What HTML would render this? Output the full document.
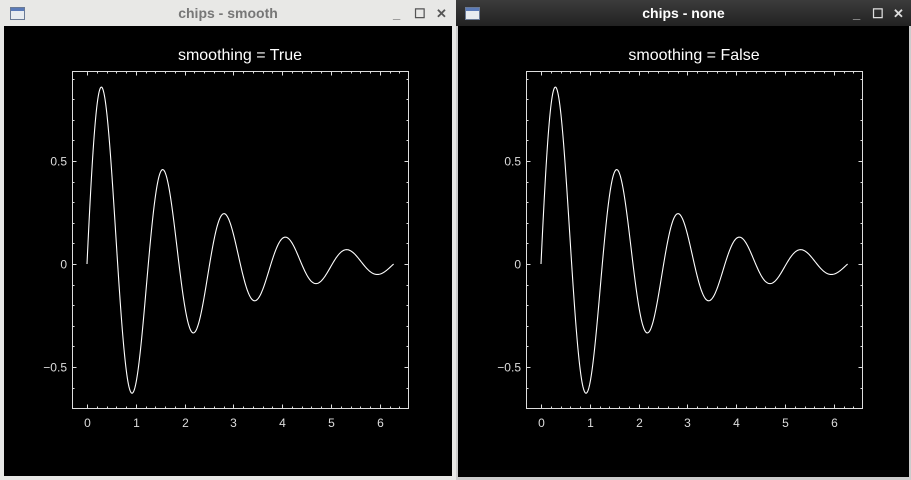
<!DOCTYPE html>
<html><head><style>
body{margin:0;width:911px;height:480px;background:#2d3f6a;overflow:hidden;position:relative;font-family:"Liberation Sans",sans-serif}
.win{position:absolute;top:0;height:480px;}
.tb{position:absolute;left:0;right:0;top:0;height:26px;font-weight:bold;font-size:14px;text-align:center;line-height:27px}
.content{position:absolute;left:3px;right:3px;top:26px;bottom:3px;background:#000}
.ic{position:absolute;left:10px;top:7px;width:13px;height:11px;border:1px solid #6a7a95;background:linear-gradient(#5a7ab8 0 3px,#e8ecf0 3px)}
.ctl{position:absolute;top:0;font-size:13px;font-weight:bold;line-height:28px}
svg{position:absolute;left:0;top:0}
</style></head><body>
<div class="win" style="left:0;width:456px;background:#e8e8e6;border-right:1px solid #999">
 <div class="tb" style="color:#777">chips - smooth</div>
 <div class="ic"></div>
 <div class="ctl" style="left:393px;color:#555">_</div>
 <div class="ctl" style="left:414px;color:#555">☐</div>
 <div class="ctl" style="left:436px;color:#555">✕</div>
 <div class="content" style="left:4px;right:4px;bottom:4px"></div>
</div>
<div class="win" style="left:456px;width:455px;background:linear-gradient(#3c3c3c,#222 26px,#ccc 26px)">
 <div class="tb" style="color:#fff">chips - none</div>
 <div class="ic" style="left:9px"></div>
 <div class="ctl" style="left:397px;color:#ddd">_</div>
 <div class="ctl" style="left:416px;color:#ddd">☐</div>
 <div class="ctl" style="left:437px;color:#ddd">✕</div>
 <div class="content" style="left:2px;right:2px;bottom:3px;top:26px"></div>
</div>
<svg id="s" width="911" height="480"></svg>
<script>
var s=document.getElementById('s'),h='';
function plot(bx,x0,title){
 var px=48.8,py=206,y0=264,top=71,bot=408,L=bx,R=bx+336;
 var X=v=>x0+v*px,Y=v=>y0-v*py;
 h+='<text x="'+(L+168)+'" y="60" fill="#fff" font-size="16" text-anchor="middle" font-family="Liberation Sans">'+title+'</text>';
 h+='<rect x="'+L+'.5" y="'+top+'.5" width="336" height="337" fill="none" stroke="#ddd"/>';
 for(var i=0;i<=32;i++){var v=i*0.2,x=Math.round(X(v))+.5;if(x>R)break;var l=i%5==0?4:2;
  h+='<line x1="'+x+'" x2="'+x+'" y1="'+(bot+.5)+'" y2="'+(bot+.5-l)+'" stroke="#ddd"/><line x1="'+x+'" x2="'+x+'" y1="'+(top+.5)+'" y2="'+(top+.5+l)+'" stroke="#ddd"/>';
  if(i%5==0)h+='<text x="'+x+'" y="427" fill="#ddd" font-size="12" text-anchor="middle" font-family="Liberation Sans">'+(i/5)+'</text>';}
 for(var j=-6;j<=9;j++){var y=Math.round(Y(j/10))+.5;var l=j%5==0?4:2;
  h+='<line x1="'+(L+.5)+'" x2="'+(L+.5+l)+'" y1="'+y+'" y2="'+y+'" stroke="#ddd"/><line x1="'+(R+.5)+'" x2="'+(R+.5-l)+'" y1="'+y+'" y2="'+y+'" stroke="#ddd"/>';
  if(j%5==0)h+='<text x="'+(L-5)+'" y="'+(y+4)+'" fill="#ddd" font-size="12" text-anchor="end" font-family="Liberation Sans">'+(j==0?'0':(j<0?'\u22120.5':'0.5'))+'</text>';}
 var p='';for(var k=0;k<=600;k++){var v=k/600*2*Math.PI;p+=(k?'L':'M')+X(v).toFixed(2)+' '+Y(Math.exp(-0.5*v)*Math.sin(5*v)).toFixed(2);}
 h+='<path d="'+p+'" fill="none" stroke="#fff" stroke-width="1.1"/>';
}
plot(72,87,'smoothing = True');plot(526,541,'smoothing = False');
s.innerHTML=h;
</script>
</body></html>
